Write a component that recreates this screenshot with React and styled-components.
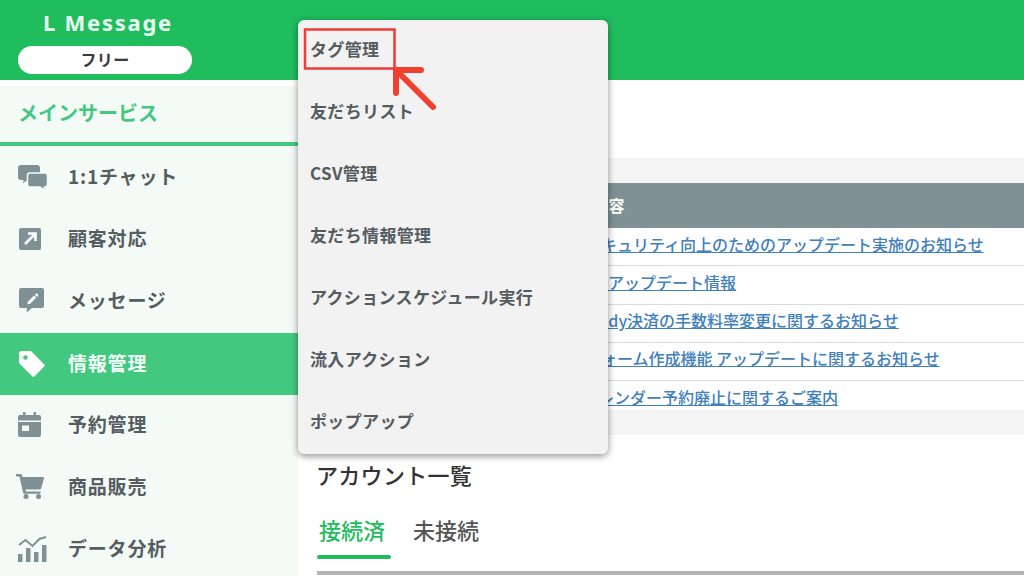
import React from "react";
import styled, { createGlobalStyle } from "styled-components";

const Global = createGlobalStyle`
  html, body { margin: 0; padding: 0; background: #fff; }
  body { font-family: "Noto Sans CJK JP", "Noto Sans", sans-serif; }
  * { box-sizing: border-box; }
`;

const Page = styled.div`
  position: relative;
  width: 1024px;
  height: 576px;
  overflow: hidden;
  display: flex;
  flex-direction: column;
`;

const Header = styled.header`
  flex: 0 0 80px;
  height: 80px;
  background: #1fbd5e;
  padding: 7px 0 0 18px;
  display: flex;
  flex-direction: column;
  width: 100%;
`;

const Logo = styled.div`
  font-family: "Noto Sans", sans-serif;
  font-size: 22px;
  line-height: 30px;
  font-weight: 700;
  letter-spacing: 1.75px;
  color: #eafaf0;
  padding-left: 25px;
`;

const Plan = styled.div`
  margin-top: 9px;
  width: 174px;
  height: 28px;
  border-radius: 14px;
  background: #fff;
  color: #3a3a3a;
  font-size: 16px;
  font-weight: 700;
  display: flex;
  align-items: center;
  justify-content: center;
  letter-spacing: 0.4px;
  padding-bottom: 2px;
`;

const Body = styled.div`
  flex: 1;
  display: flex;
  min-height: 0;
`;

const Sidebar = styled.aside`
  flex: 0 0 298px;
  background: #f4fbf7;
  border-top: 6px solid #fff;
`;

const SectionTitle = styled.div`
  height: 60px;
  padding: 0 0 4px 18px;
  border-bottom: 4px solid #43c97f;
  color: #43c97f;
  font-size: 20px;
  font-weight: 700;
  display: flex;
  align-items: center;
`;

const NavItem = styled.div`
  height: 62px;
  padding: 0 0 4px 16px;
  display: flex;
  align-items: center;
  font-size: 19px;
  letter-spacing: 0.8px;
  font-weight: 700;
  color: ${(p) => (p.$active ? "#f2fff8" : "#565d61")};
  background: ${(p) => (p.$active ? "#43c97f" : "transparent")};
  margin-top: ${(p) => (p.$active ? "1px" : "0")};
  margin-bottom: ${(p) => (p.$active ? "-1px" : "0")};
`;

const IconSlot = styled.span`
  flex: 0 0 52px;
  width: 52px;
  display: flex;
  align-items: center;
  margin-top: 3px;
`;

const Content = styled.main`
  flex: 1;
  min-width: 0;
  padding-top: 78px;
  background: #fff;
`;

const NewsBand = styled.section`
  background: #f5f5f5;
  padding: 25px 0;
`;

const NewsHead = styled.div`
  height: 45px;
  background: #7f9194;
  color: #fff;
  font-size: 16px;
  font-weight: 700;
  display: flex;
  align-items: center;
  padding: 0 0 2px 294px;
  letter-spacing: 0.5px;
`;

const NewsRow = styled.div`
  height: ${(p) => (p.$last ? "29px" : "38.25px")};
  background: #fff;
  border-bottom: ${(p) => (p.$last ? "none" : "1px solid #d8dbdc")};
  padding: 4.5px 0 0 0;
  font-size: 16px;
  line-height: 22px;
  white-space: nowrap;
  overflow: hidden;
`;

const NewsLink = styled.a`
  color: #3f80bd;
  font-weight: 500;
  text-decoration: underline;
`;

const Accounts = styled.section`
  padding: 23px 0 0 19px;
`;

const AccountsTitle = styled.h2`
  margin: 0 0 0 -1px;
  font-size: 22px;
  line-height: 32px;
  font-weight: 500;
  letter-spacing: 0.3px;
  color: #333;
`;

const Tabs = styled.div`
  margin-top: 23px;
  display: flex;
  gap: 20px;
  height: 46px;
`;

const Tab = styled.div`
  width: 74px;
  height: 46px;
  display: flex;
  flex-direction: column;
  justify-content: space-between;
  color: ${(p) => (p.$on ? "#1fbd5e" : "#555")};
  font-size: 22px;
  line-height: 32px;
  font-weight: 500;
`;

const TabLabel = styled.span`
  padding-left: 2px;
`;

const TabMarker = styled.span`
  height: 4px;
  border-radius: 2px;
  background: #1fbd5e;
`;

const TabRule = styled.div`
  margin-top: 12px;
  height: 4px;
  background: #b5b5b5;
`;

const Menu = styled.nav`
  position: absolute;
  left: 298px;
  top: 20px;
  width: 310px;
  height: 434px;
  background: #f2f2f2;
  border-radius: 6px;
  box-shadow: 0 2px 7px rgba(0, 0, 0, 0.45);
  padding: 0 0 0 12px;
`;

const MenuItem = styled.div`
  height: 62px;
  display: flex;
  align-items: center;
  padding-bottom: 6px;
  font-size: 17px;
  letter-spacing: 0.35px;
  font-weight: 700;
  color: #555c60;
`;

const Annotation = styled.svg`
  position: absolute;
  left: 300px;
  top: 25px;
  width: 145px;
  height: 95px;
  pointer-events: none;
`;

const Gray = "#7f9194";

const ChatIcon = () => (
  <svg width="30" height="26" viewBox="0 0 30 26" style={{ marginLeft: 2 }}>
    <path fill={Gray} d="M3 1h16a3 3 0 0 1 3 3v9a3 3 0 0 1-3 3H10l-5 3 .6-3H3a3 3 0 0 1-3-3V4a3 3 0 0 1 3-3z" />
    <path fill={Gray} stroke="#f4fbf7" strokeWidth="1.5" d="M12 9h15a2.5 2.5 0 0 1 2.5 2.5v9a2.5 2.5 0 0 1-2.5 2.5h-.5l.4 3.2-5-3.2H12a2.5 2.5 0 0 1-2.5-2.5v-9A2.5 2.5 0 0 1 12 9z" />
  </svg>
);

const ArrowSquareIcon = () => (
  <svg width="22" height="22" viewBox="0 0 22 22" style={{ marginLeft: 3 }}>
    <rect width="22" height="22" rx="2" fill={Gray} />
    <path d="M6 16 15.5 6.5M9 5.5h7.5V13" stroke="#fff" strokeWidth="2.6" fill="none" />
  </svg>
);

const MessageIcon = () => (
  <svg width="25" height="25" viewBox="0 0 25 25" style={{ marginLeft: 3 }}>
    <path fill={Gray} d="M2 0h21a2 2 0 0 1 2 2v16a2 2 0 0 1-2 2H13l-5.5 4.6L8 20H2a2 2 0 0 1-2-2V2a2 2 0 0 1 2-2z" />
    <path fill="#fff" d="M9 13.5 15 7.5l2.2 2.2-6 6-2.8.6zM15.8 6.7l1-1a1 1 0 0 1 1.4 0l.8.8a1 1 0 0 1 0 1.4l-1 1z" />
  </svg>
);

const TagIcon = () => (
  <svg width="26" height="26" viewBox="0 0 26 26" style={{ marginLeft: 3 }}>
    <path fill="#fff" fillRule="evenodd" d="M3 0h9l13 13.2a1.8 1.8 0 0 1 0 2.5l-9.3 9.5a1.8 1.8 0 0 1-2.5 0L0 12V3a3 3 0 0 1 3-3zM6.5 4.2a2.3 2.3 0 1 0 0 4.6 2.3 2.3 0 0 0 0-4.6z" />
  </svg>
);

const CalendarIcon = () => (
  <svg width="23" height="25" viewBox="0 0 23 25" style={{ marginLeft: 2 }}>
    <path fill={Gray} d="M5 0h2.5v3h8V0H18v3h3a2 2 0 0 1 2 2v3.5H0V5a2 2 0 0 1 2-2h3z" />
    <path fill={Gray} fillRule="evenodd" d="M0 10h23v13a2 2 0 0 1-2 2H2a2 2 0 0 1-2-2zM4 13.5v5.5h7v-5.5z" />
  </svg>
);

const CartIcon = () => (
  <svg width="28" height="25" viewBox="0 0 28 25" style={{ marginLeft: 0 }}>
    <path fill={Gray} d="M0 0h4.5a1.5 1.5 0 0 1 1.4 1l.7 2H27a1 1 0 0 1 1 1.3l-2.8 10a1.5 1.5 0 0 1-1.4 1.1H9.5l.5 2h14.5v2.4H8.5a1.5 1.5 0 0 1-1.4-1.1L3.5 2.4H0z" />
    <circle cx="10" cy="22.5" r="2.5" fill={Gray} />
    <circle cx="22.5" cy="22.5" r="2.5" fill={Gray} />
  </svg>
);

const ChartIcon = () => (
  <svg width="29" height="26" viewBox="0 0 29 26" style={{ marginLeft: 2 }}>
    <path d="M1 9 7.5 4l7 6 7-7L28 1" fill="none" stroke={Gray} strokeWidth="2" />
    <rect x="0" y="18" width="4.5" height="8" rx="0.6" fill={Gray} />
    <rect x="8" y="12" width="4.5" height="14" rx="0.6" fill={Gray} />
    <rect x="16" y="16" width="4.5" height="10" rx="0.6" fill={Gray} />
    <rect x="24" y="9" width="4.5" height="17" rx="0.6" fill={Gray} />
  </svg>
);

const navItems = [
  { label: "1:1チャット", Icon: ChatIcon },
  { label: "顧客対応", Icon: ArrowSquareIcon },
  { label: "メッセージ", Icon: MessageIcon },
  { label: "情報管理", Icon: TagIcon, active: true },
  { label: "予約管理", Icon: CalendarIcon },
  { label: "商品販売", Icon: CartIcon },
  { label: "データ分析", Icon: ChartIcon },
];

const news = [
  { text: "セキュリティ向上のためのアップデート実施のお知らせ", inset: 287 },
  { text: "8月アップデート情報", inset: 285 },
  { text: "Ready決済の手数料率変更に関するお知らせ", inset: 282 },
  { text: "フォーム作成機能 アップデートに関するお知らせ", inset: 287 },
  { text: "カレンダー予約廃止に関するご案内", inset: 284 },
];

const menu = ["タグ管理", "友だちリスト", "CSV管理", "友だち情報管理", "アクションスケジュール実行", "流入アクション", "ポップアップ"];

export default function App() {
  return (
    <Page>
      <Global />
      <Header>
        <Logo>L Message</Logo>
        <Plan>フリー</Plan>
      </Header>
      <Body>
        <Sidebar>
          <SectionTitle>メインサービス</SectionTitle>
          {navItems.map(({ label, Icon, active }) => (
            <NavItem key={label} $active={active}>
              <IconSlot>
                <Icon />
              </IconSlot>
              {label}
            </NavItem>
          ))}
        </Sidebar>
        <Content>
          <NewsBand>
            <NewsHead>内容</NewsHead>
            {news.map((n, i) => (
              <NewsRow key={n.text} $last={i === news.length - 1} style={{ paddingLeft: n.inset }}>
                <NewsLink>{n.text}</NewsLink>
              </NewsRow>
            ))}
          </NewsBand>
          <Accounts>
            <AccountsTitle>アカウント一覧</AccountsTitle>
            <Tabs>
              <Tab $on>
                <TabLabel>接続済</TabLabel>
                <TabMarker />
              </Tab>
              <Tab>
                <TabLabel>未接続</TabLabel>
              </Tab>
            </Tabs>
            <TabRule />
          </Accounts>
        </Content>
      </Body>
      <Menu>
        {menu.map((m) => (
          <MenuItem key={m}>{m}</MenuItem>
        ))}
      </Menu>
      <Annotation viewBox="0 0 145 95">
        <rect x="5" y="4.5" width="89.5" height="39" fill="none" stroke="#ef3b36" strokeWidth="2.5" />
        <path d="M121 45H96V68M96 45 133 82" fill="none" stroke="#f2402f" strokeWidth="6" strokeLinecap="round" strokeLinejoin="round" />
      </Annotation>
    </Page>
  );
}
